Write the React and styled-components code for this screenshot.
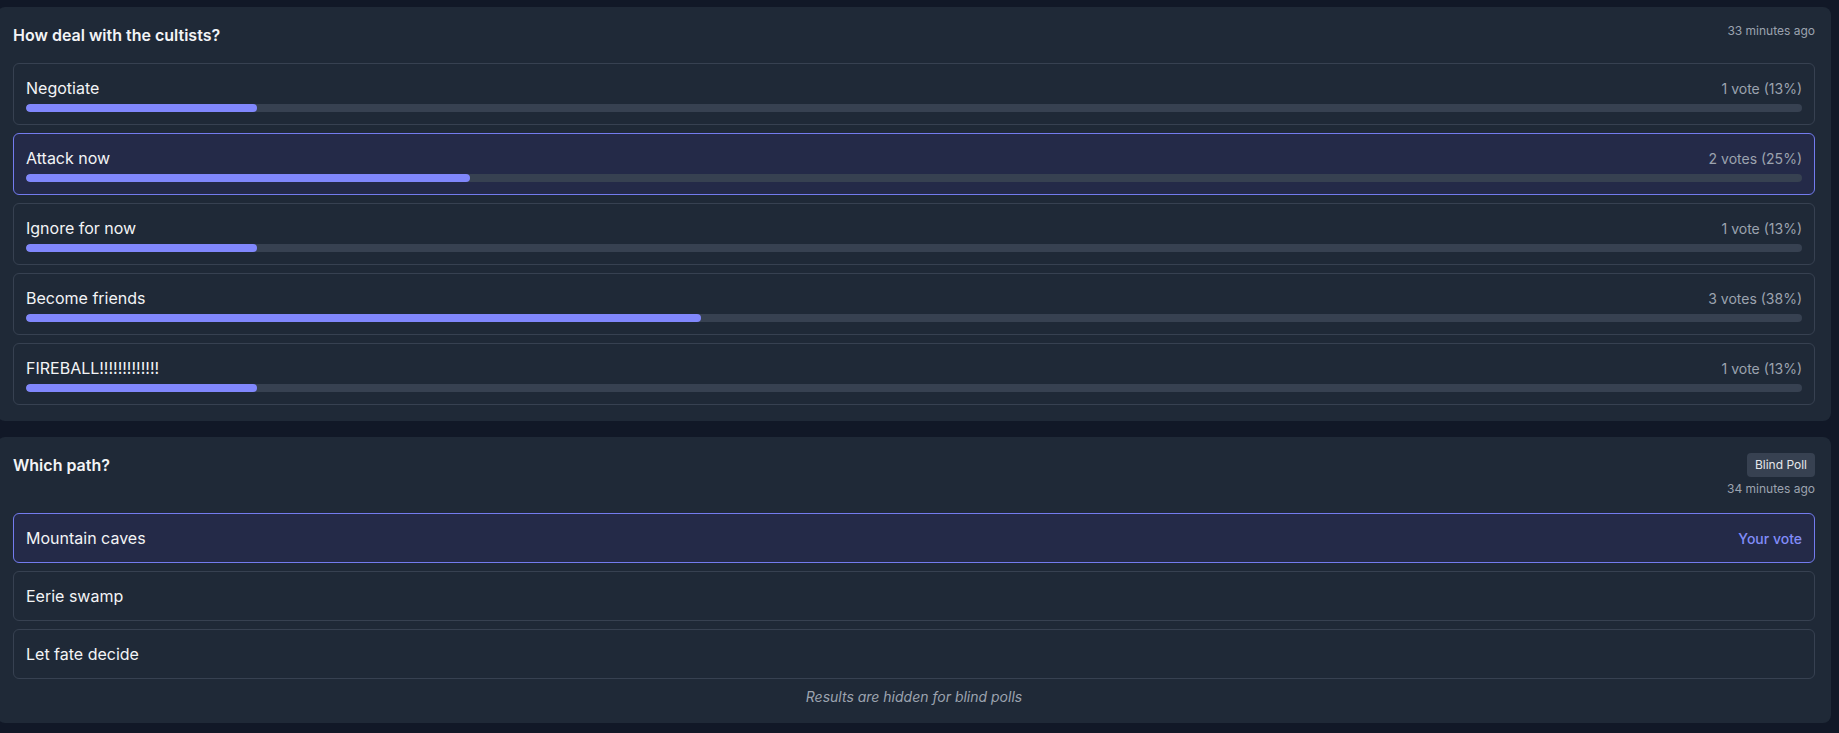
import styled, { createGlobalStyle } from "styled-components";

const GlobalStyle = createGlobalStyle`
  body {
    margin: 0;
    background-color: #111827;
    font-family: "Inter", "Noto Sans", sans-serif;
  }
`;

const cultistOptions = [
  { label: "Negotiate", votes: 1, percent: 13 },
  { label: "Attack now", votes: 2, percent: 25, mine: true },
  { label: "Ignore for now", votes: 1, percent: 13 },
  { label: "Become friends", votes: 3, percent: 38 },
  { label: "FIREBALL!!!!!!!!!!!!!", votes: 1, percent: 13 },
];

const pathOptions = [
  { label: "Mountain caves", mine: true },
  { label: "Eerie swamp" },
  { label: "Let fate decide" },
];

export default function App() {
  return (
    <>
      <GlobalStyle />
      <PageStyle>
        <PollCardStyle>
          <HeaderStyle>
            <TitleStyle>How deal with the cultists?</TitleStyle>
            <MetaStyle>
              <TimeStyle>33 minutes ago</TimeStyle>
            </MetaStyle>
          </HeaderStyle>
          <OptionListStyle>
            {cultistOptions.map((option) => (
              <OptionStyle key={option.label} selected={option.mine}>
                <OptionRowStyle>
                  <OptionLabelStyle>{option.label}</OptionLabelStyle>
                  <VoteCountStyle>
                    {option.votes} {option.votes === 1 ? "vote" : "votes"} ({option.percent}%)
                  </VoteCountStyle>
                </OptionRowStyle>
                <TrackStyle>
                  <FillStyle style={{ width: `${option.percent}%` }} />
                </TrackStyle>
              </OptionStyle>
            ))}
          </OptionListStyle>
        </PollCardStyle>

        <PollCardStyle>
          <HeaderStyle>
            <TitleStyle>Which path?</TitleStyle>
            <MetaStyle>
              <BadgeStyle>Blind Poll</BadgeStyle>
              <TimeStyle>34 minutes ago</TimeStyle>
            </MetaStyle>
          </HeaderStyle>
          <OptionListStyle>
            {pathOptions.map((option) => (
              <OptionStyle key={option.label} selected={option.mine}>
                <OptionRowStyle>
                  <OptionLabelStyle>{option.label}</OptionLabelStyle>
                  {option.mine && <YourVoteStyle>Your vote</YourVoteStyle>}
                </OptionRowStyle>
              </OptionStyle>
            ))}
          </OptionListStyle>
          <HiddenNoteStyle>Results are hidden for blind polls</HiddenNoteStyle>
        </PollCardStyle>
      </PageStyle>
    </>
  );
}

const PageStyle = styled.div`
  display: flex;
  flex-direction: column;
  gap: 16px;
  padding: 7px 8px 0 0;
  margin-left: -3px;
`;

const PollCardStyle = styled.section`
  background-color: #1f2937;
  border-radius: 8px;
  padding: 16px;
`;

const HeaderStyle = styled.div`
  display: flex;
  justify-content: space-between;
  align-items: flex-start;
  margin-bottom: 16px;
`;

const TitleStyle = styled.h3`
  margin: 0;
  font-size: 16px;
  line-height: 24px;
  font-weight: 600;
  color: #f3f4f6;
`;

const MetaStyle = styled.div`
  display: flex;
  flex-direction: column;
  align-items: flex-end;
  gap: 4px;
`;

const TimeStyle = styled.span`
  font-size: 12px;
  line-height: 16px;
  color: #9ca3af;
`;

const BadgeStyle = styled.span`
  font-size: 12px;
  line-height: 16px;
  padding: 4px 8px;
  border-radius: 4px;
  background-color: #374151;
  color: #e5e7eb;
`;

const OptionListStyle = styled.div`
  display: flex;
  flex-direction: column;
  gap: 8px;
`;

const OptionStyle = styled.div`
  padding: 12px;
  border-radius: 6px;
  border: 1px solid ${({ selected }) => (selected ? "#737bee" : "#374151")};
  background-color: ${({ selected }) => (selected ? "#242a48" : "transparent")};
`;

const OptionRowStyle = styled.div`
  display: flex;
  justify-content: space-between;
  align-items: baseline;
`;

const OptionLabelStyle = styled.span`
  font-size: 16px;
  line-height: 24px;
  color: #f3f4f6;
`;

const VoteCountStyle = styled.span`
  font-size: 14px;
  line-height: 20px;
  color: #9ca3af;
`;

const YourVoteStyle = styled.span`
  font-size: 14px;
  line-height: 20px;
  font-weight: 500;
  color: #818cf8;
`;

const TrackStyle = styled.div`
  margin-top: 4px;
  height: 8px;
  border-radius: 9999px;
  background-color: #374151;
  overflow: hidden;
`;

const FillStyle = styled.div`
  height: 100%;
  border-radius: 9999px;
  background-color: #8087fc;
`;

const HiddenNoteStyle = styled.p`
  margin: 8px 0 0;
  text-align: center;
  font-size: 14px;
  line-height: 20px;
  font-style: italic;
  color: #9ca3af;
`;
